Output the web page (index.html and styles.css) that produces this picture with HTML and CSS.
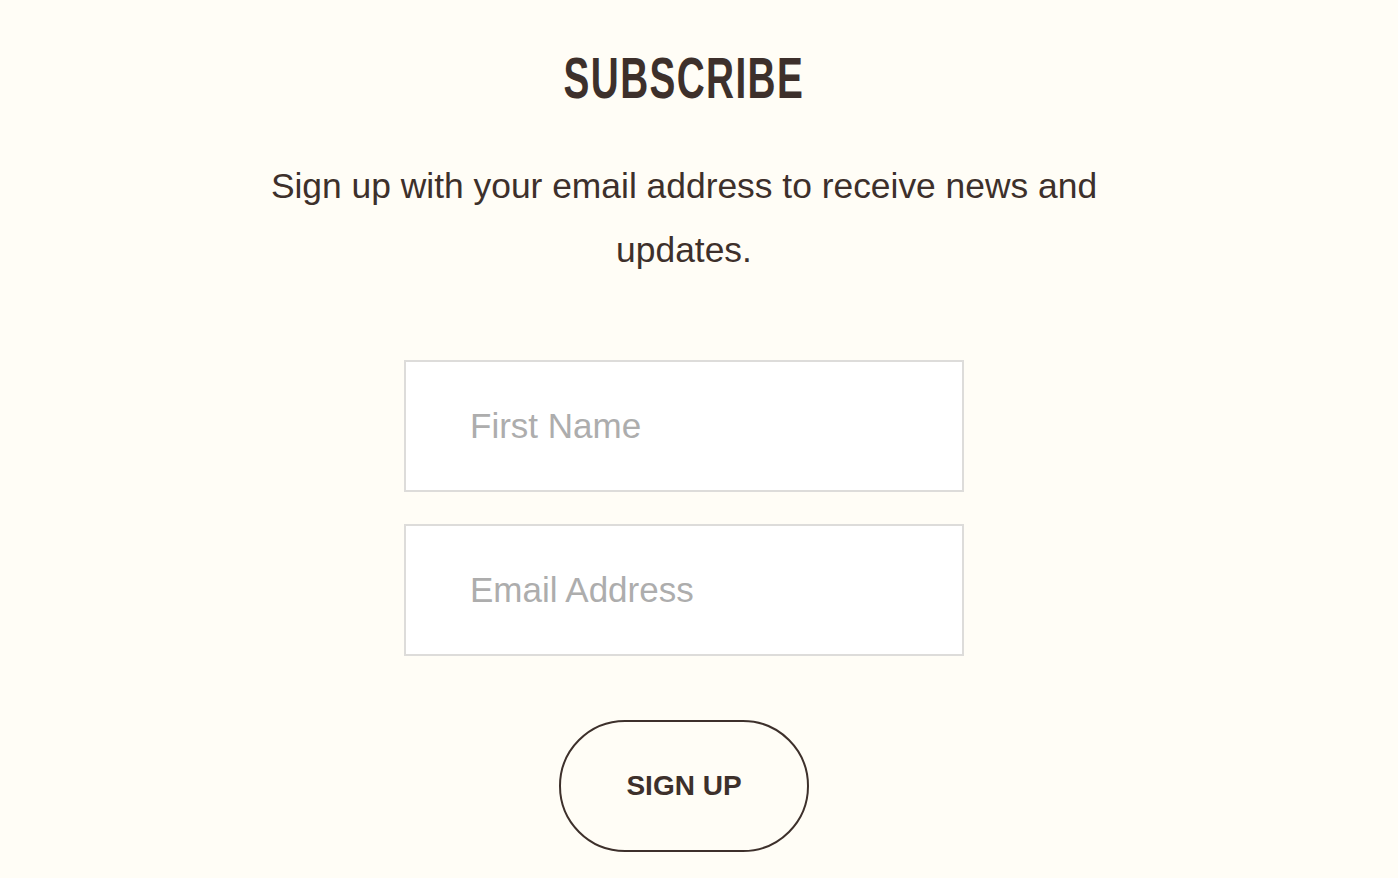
FILE: index.html
```html
<html>
<head>
    <title>Subscribe</title>
    <link rel="stylesheet" href="styles.css">
</head>
<body>
<div class="subscribe">
    <h2 class="subscribe-title">SUBSCRIBE</h2>
    <p class="subscribe-text">Sign up with your email address to receive news and updates.</p>
    <form class="subscribe-form" onsubmit="return false">
        <input class="field" type="text" placeholder="First Name">
        <input class="field" type="email" placeholder="Email Address">
        <button class="signup" type="submit">SIGN UP</button>
    </form>
</div>
</body>
</html>
```

FILE: styles.css
```css
body {
    margin: 0;
    background-color: #fffdf6;
    color: #3d302b;
    font-family: "Liberation Sans", Arial, sans-serif;
}
.subscribe {
    display: flex;
    flex-direction: column;
    align-items: center;
    padding: 46px 30px 0 0;
}
/* no condensed face available, so squeeze the bold one */
.subscribe-title {
    margin: 0;
    font-family: "Liberation Sans", Arial, sans-serif;
    font-weight: bold;
    font-size: 57px;
    line-height: 64px;
    letter-spacing: 2px;
    transform: scaleX(0.68);
}
.subscribe-text {
    width: 860px;
    margin: 44px 0 0;
    text-align: center;
    font-size: 35.4px;
    line-height: 64px;
}
.subscribe-form {
    display: flex;
    flex-direction: column;
    align-items: center;
    gap: 32px;
    margin-top: 78px;
}
.field {
    box-sizing: border-box;
    width: 560px;
    height: 132px;
    padding: 0 0 0 64px;
    border: 2px solid #dddcda;
    background: #fff;
    font-family: "Liberation Sans", Arial, sans-serif;
    font-size: 35px;
    color: #3d302b;
    outline: none;
}
.field::placeholder {
    color: #adadad;
}
.signup {
    box-sizing: border-box;
    width: 250px;
    height: 132px;
    margin-top: 32px;
    border: 2px solid #3d302b;
    border-radius: 66px;
    background: transparent;
    color: #3d302b;
    font-family: "Liberation Sans", Arial, sans-serif;
    font-weight: bold;
    font-size: 28px;
}
```
